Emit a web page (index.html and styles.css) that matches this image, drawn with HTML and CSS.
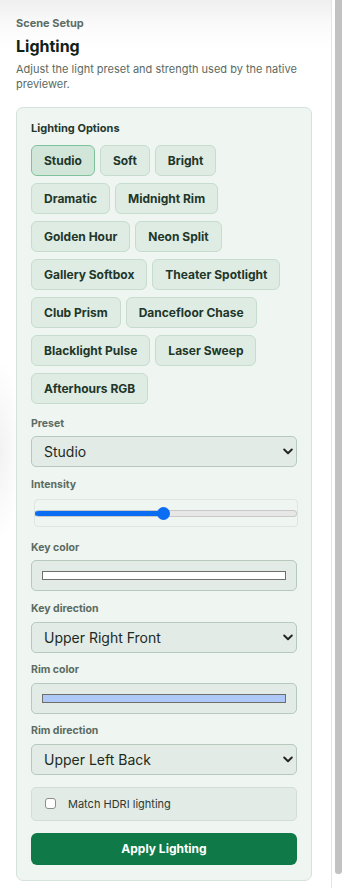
FILE: index.html
```html
<!DOCTYPE html>
<html lang="en">
<head>
<meta charset="utf-8">
<title>Lighting</title>
<link rel="stylesheet" href="styles.css">
</head>
<body>
<div class="app">
  <aside class="panel">
    <p class="eyebrow">Scene Setup</p>
    <h1 class="title">Lighting</h1>
    <p class="desc">Adjust the light preset and strength used by the native previewer.</p>
    <section class="card">
      <div class="card-label">Lighting Options</div>
      <div class="chips">
        <button class="chip active">Studio</button>
        <button class="chip">Soft</button>
        <button class="chip">Bright</button>
        <button class="chip">Dramatic</button>
        <button class="chip">Midnight Rim</button>
        <button class="chip">Golden Hour</button>
        <button class="chip">Neon Split</button>
        <button class="chip">Gallery Softbox</button>
        <button class="chip">Theater Spotlight</button>
        <button class="chip">Club Prism</button>
        <button class="chip">Dancefloor Chase</button>
        <button class="chip">Blacklight Pulse</button>
        <button class="chip">Laser Sweep</button>
        <button class="chip">Afterhours RGB</button>
      </div>
      <div class="fields">
        <label class="field">
          <span class="field-label">Preset</span>
          <select class="select">
            <option selected>Studio</option>
            <option>Soft</option>
            <option>Bright</option>
          </select>
        </label>
        <label class="field">
          <span class="field-label">Intensity</span>
          <span class="range-box"><input class="range" type="range" min="0" max="100" value="49" style="--fill:49%"></span>
        </label>
        <label class="field">
          <span class="field-label">Key color</span>
          <input class="color" type="color" value="#ffffff">
        </label>
        <label class="field">
          <span class="field-label">Key direction</span>
          <select class="select">
            <option selected>Upper Right Front</option>
          </select>
        </label>
        <label class="field">
          <span class="field-label">Rim color</span>
          <input class="color" type="color" value="#aec8f7">
        </label>
        <label class="field">
          <span class="field-label">Rim direction</span>
          <select class="select">
            <option selected>Upper Left Back</option>
          </select>
        </label>
        <label class="check">
          <input class="checkbox" type="checkbox">
          <span>Match HDRI lighting</span>
        </label>
        <button class="apply">Apply Lighting</button>
      </div>
    </section>
  </aside>
  <div class="scrollbar"><div class="thumb"></div></div>
</div>
</body>
</html>
```

FILE: styles.css
```css
* { box-sizing: border-box; }

html, body {
  margin: 0;
  padding: 0;
  height: 100%;
}

body {
  font-family: Inter, "Noto Sans", "Liberation Sans", sans-serif;
  background: #ffffff;
  color: #1b2c22;
}

.app {
  display: flex;
  height: 888px;
  overflow: hidden;
}

.panel {
  width: 332px;
  flex: none;
  border-right: 1px solid #e4e6e5;
  padding: 16px 19px 0 16px;
  background:
    radial-gradient(ellipse 22px 90px at 0 450px, rgba(0, 0, 0, 0.05), rgba(0, 0, 0, 0)),
    linear-gradient(#efefef 0, #fafafa 24px, #ffffff 50px);
}

.eyebrow {
  margin: 0;
  font-size: 11px;
  line-height: 14px;
  font-weight: 700;
  color: #5d6d64;
}

.title {
  margin: 6px 0 0;
  font-size: 16px;
  line-height: 20px;
  font-weight: 700;
  color: #0f2218;
}

.desc {
  margin: 6px 0 0;
  font-size: 11px;
  line-height: 15px;
  color: #5b6a62;
}

.card {
  margin-top: 15px;
  width: 296px;
  background: #eff5f1;
  border: 1px solid #d5e3da;
  border-radius: 7px;
  padding: 14px 14px 15px;
}

.card-label {
  font-size: 11px;
  line-height: 12px;
  font-weight: 700;
  color: #24382d;
}

.chips {
  margin-top: 11px;
  display: flex;
  flex-wrap: wrap;
  column-gap: 5px;
  row-gap: 7px;
}

.chip {
  font-family: inherit;
  height: 31px;
  padding: 0 12px;
  font-size: 12px;
  font-weight: 700;
  color: #1f3629;
  background: #deece3;
  border: 1px solid #c6dccf;
  border-radius: 6px;
}

.chip.active {
  background: #d1e6d9;
  border-color: #7ec29c;
}

.fields {
  margin-top: 13.5px;
  display: flex;
  flex-direction: column;
  gap: 11.7px;
}

.field {
  display: flex;
  flex-direction: column;
  gap: 6px;
}

.field-label {
  font-size: 10.5px;
  line-height: 12.5px;
  font-weight: 700;
  color: #5b6b62;
}

.select {
  -webkit-appearance: none;
  appearance: none;
  width: 100%;
  height: 31px;
  font-family: inherit;
  font-size: 14px;
  color: #1d2a23;
  padding: 0 20px 0 12px;
  background-color: #e3ebe6;
  background-image: url("data:image/svg+xml;utf8,<svg xmlns='http://www.w3.org/2000/svg' width='10' height='7' viewBox='0 0 10 7'><path d='M1.2 1.5L5 5.2 8.8 1.5' fill='none' stroke='%23222' stroke-width='1.9' stroke-linecap='round' stroke-linejoin='round'/></svg>");
  background-repeat: no-repeat;
  background-position: right 3px center;
  background-size: 10px 7px;
  border: 1px solid #b7c8bd;
  border-radius: 5px;
  outline: none;
}

.range-box {
  display: block;
  margin: 2px -1px 3px 3px;
  height: 28px;
  border: 1px solid #dde6e0;
  border-radius: 4px;
  position: relative;
}

.range {
  -webkit-appearance: none;
  appearance: none;
  display: block;
  margin: 0;
  width: 100%;
  height: 26px;
  background: transparent;
  outline: none;
}

.range::-webkit-slider-runnable-track {
  height: 7px;
  border-radius: 4px;
  background: linear-gradient(to right, #0b6df2 var(--fill), #e7e7e7 var(--fill));
  border: 1px solid #c9c9c9;
  border-left-color: #0b6df2;
}

.range::-webkit-slider-thumb {
  -webkit-appearance: none;
  appearance: none;
  width: 13px;
  height: 13px;
  border-radius: 50%;
  background: #0b6df2;
  border: none;
  margin-top: -4px;
}

.color {
  -webkit-appearance: none;
  appearance: none;
  width: 100%;
  height: 31px;
  padding: 10px;
  background: #e3ebe6;
  border: 1px solid #b7c8bd;
  border-radius: 5px;
  cursor: pointer;
}

.color::-webkit-color-swatch-wrapper {
  padding: 0;
}

.color::-webkit-color-swatch {
  border: 1px solid #6e6e6e;
  border-radius: 0;
}

.check {
  display: flex;
  align-items: center;
  gap: 12px;
  height: 34.5px;
  padding: 0 13px;
  background: #e3ebe6;
  border: 1px solid #d2ddd6;
  border-radius: 5px;
  font-size: 11px;
  color: #2c3a32;
}

.checkbox {
  -webkit-appearance: none;
  appearance: none;
  margin: 0;
  width: 11px;
  height: 11px;
  background: #ffffff;
  border: 1px solid #8c8c8c;
  border-radius: 3px;
}

.apply {
  font-family: inherit;
  height: 32px;
  width: 100%;
  background: #0f7a47;
  color: #ffffff;
  font-size: 12px;
  font-weight: 700;
  border: none;
  border-radius: 6px;
}

.scrollbar {
  flex: none;
  width: 10px;
  padding-left: 3px;
  background: #ffffff;
}

.thumb {
  width: 7px;
  height: 874px;
  background: #c2c2c2;
  border-radius: 0 0 3px 3px;
}
```
